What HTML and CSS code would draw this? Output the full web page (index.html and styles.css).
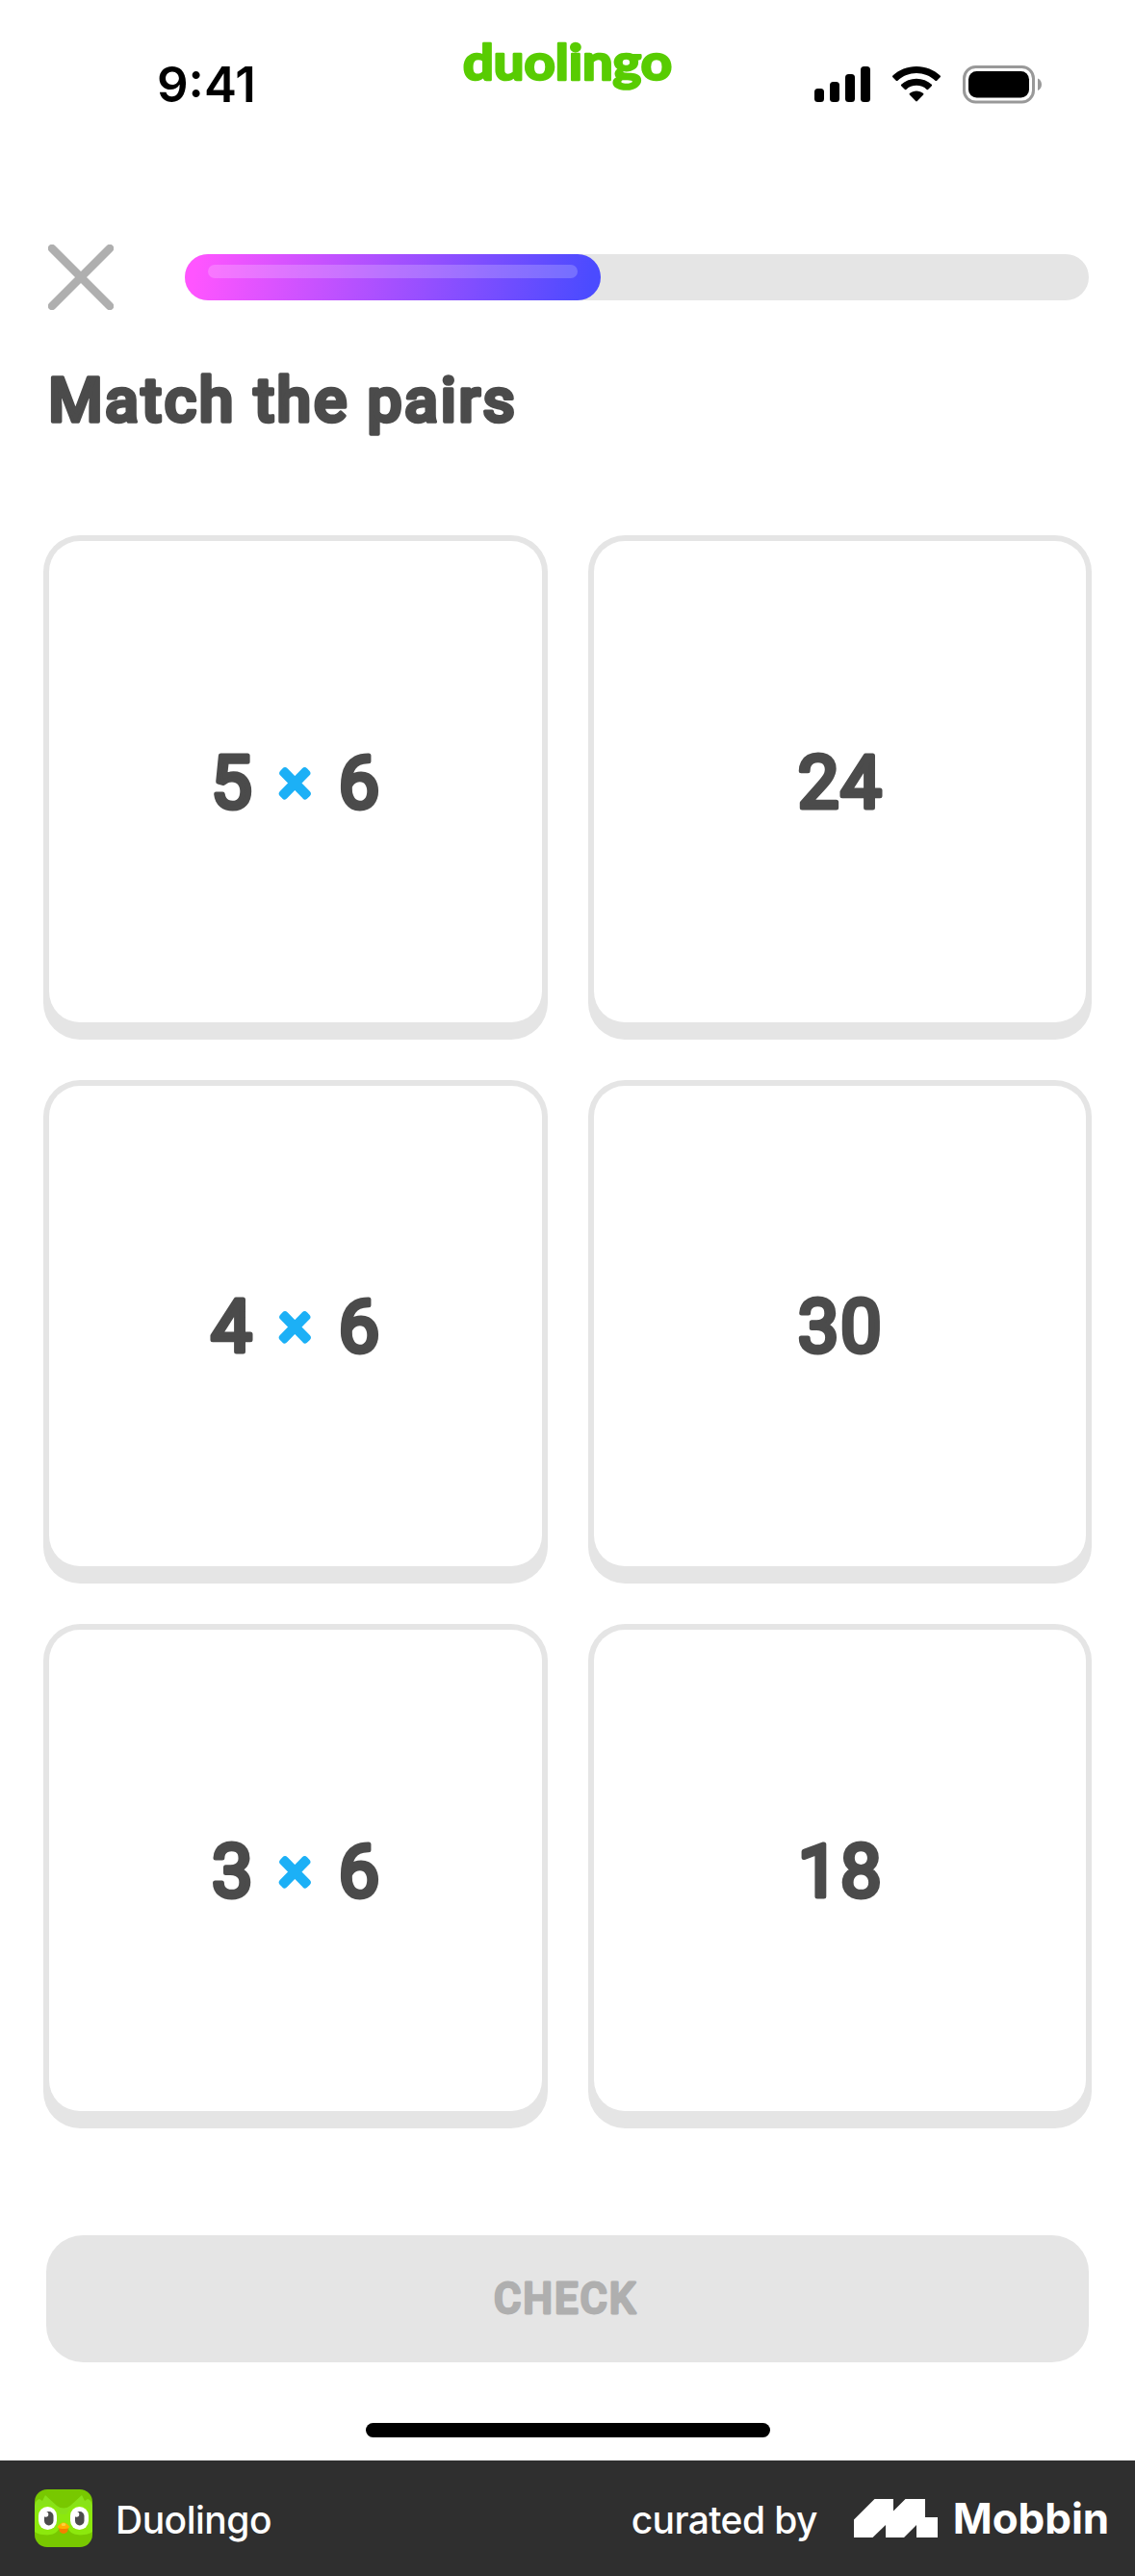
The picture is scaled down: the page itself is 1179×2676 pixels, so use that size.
FILE: index.html
```html
<!DOCTYPE html>
<html lang="en">
<head>
<meta charset="utf-8">
<title>Match the pairs</title>
<link rel="stylesheet" href="styles.css">
</head>
<body>
<div class="screen">
  <header class="status">
    <div class="time">9:41</div>
    <svg class="wordmark" width="226" height="80" viewBox="0 0 226 80"><text x="5" y="53" textLength="217" lengthAdjust="spacingAndGlyphs">duolingo</text></svg>
    <div class="indicators">
      <svg width="58" height="38" viewBox="0 0 58 38"><rect y="24" width="10" height="14" rx="3.5"/><rect x="16" y="17" width="10" height="21" rx="3.5"/><rect x="32" y="9" width="10" height="29" rx="3.5"/><rect x="48" y="1" width="10" height="37" rx="3.5"/></svg>
      <svg width="50" height="38" viewBox="0 0 50 38"><path d="M25 1C34.500 1 43.400 4.600 49.600 10.600Q50.400 11.400 49.600 12.200L46.200 15.700Q45.400 16.500 44.500 15.700C39.200 10.900 32.300 8.100 25 8.100S10.800 10.900 5.500 15.700Q4.600 16.500 3.800 15.700L.4 12.200Q-.4 11.400.4 10.600C6.600 4.600 15.500 1 25 1Z"/><path d="M25 13.700C31 13.700 36.600 15.900 40.800 19.700Q41.600 20.500 40.800 21.300L37.300 24.800Q36.500 25.500 35.700 24.900C32.800 22.300 29.100 20.800 25 20.800S17.200 22.300 14.300 24.900Q13.500 25.500 12.700 24.800L9.200 21.300Q8.400 20.500 9.200 19.700C13.400 15.900 19 13.700 25 13.700Z"/><path d="M25 26.400C27.700 26.400 30.100 27.300 32.100 28.900Q32.900 29.700 32.100 30.500L25.800 37Q25 37.800 24.200 37L17.900 30.500Q17.100 29.700 17.900 28.900C19.900 27.300 22.300 26.400 25 26.400Z"/></svg>
      <svg width="83" height="40" viewBox="0 0 83 40"><rect x="1.500" y="1.500" width="72" height="36.500" rx="12" fill="none" stroke="#999" stroke-width="3"/><rect x="6" y="6" width="63" height="27.500" rx="8.500"/><path d="M78 13.500C83.300 15.500 83.300 24 78 26Z" fill="#999"/></svg>
    </div>
  </header>

  <div class="progress-row">
    <svg class="close" width="68" height="68" viewBox="0 0 68 68"><path d="M4 4 64 64M64 4 4 64"/></svg>
    <div class="track"><div class="fill" style="width:432px"><div class="shine"></div></div></div>
  </div>

  <h1 class="title"><svg width="520" height="90" viewBox="0 0 520 90"><text x="2" y="65" textLength="485" lengthAdjust="spacing">Match the pairs</text></svg></h1>

  <main class="pairs">
    <div class="card"><div class="face"><svg class="sum" width="200" height="120" viewBox="0 0 200 120"><text x="34" y="86.500" text-anchor="middle">5</text><text class="times" x="99.500" y="78" text-anchor="middle">×</text><text x="166.500" y="86.500" text-anchor="middle">6</text></svg></div></div>
    <div class="card"><div class="face"><svg class="sum" width="200" height="120" viewBox="0 0 200 120"><text x="101" y="86.500" text-anchor="middle">24</text></svg></div></div>
    <div class="card"><div class="face"><svg class="sum" width="200" height="120" viewBox="0 0 200 120"><text x="34" y="86.500" text-anchor="middle">4</text><text class="times" x="99.500" y="78" text-anchor="middle">×</text><text x="166.500" y="86.500" text-anchor="middle">6</text></svg></div></div>
    <div class="card"><div class="face"><svg class="sum" width="200" height="120" viewBox="0 0 200 120"><text x="101" y="86.500" text-anchor="middle">30</text></svg></div></div>
    <div class="card"><div class="face"><svg class="sum" width="200" height="120" viewBox="0 0 200 120"><text x="35" y="86.500" text-anchor="middle">3</text><text class="times" x="99.500" y="78" text-anchor="middle">×</text><text x="166.500" y="86.500" text-anchor="middle">6</text></svg></div></div>
    <div class="card"><div class="face"><svg class="sum" width="200" height="120" viewBox="0 0 200 120"><text x="101" y="86.500" text-anchor="middle">18</text></svg></div></div>
  </main>

  <button class="check"><svg width="180" height="60" viewBox="0 0 180 60"><text x="13" y="45" textLength="149" lengthAdjust="spacingAndGlyphs">CHECK</text></svg></button>
  <div class="home"></div>
</div>

<footer class="footer">
  <svg class="app-icon" width="60" height="60" viewBox="0 0 60 60">
    <rect width="60" height="60" fill="#78c800"/>
    <path d="M0 44V17Q1 11 5 10L8 12 11 6 23 17Q30 22 37 17L49 6 52 12 55 10Q59 11 60 17V44Q54 48 44 47 37 46 35 41H25Q23 46 16 47 6 48 0 44Z" fill="#89e219"/>
    <path d="M0 44V25Q3 17 13 16 23 17 27 26H33Q37 17 47 16 57 17 60 25V44Q54 48 44 47 37 46 35 41H25Q23 46 16 47 6 48 0 44Z" fill="#8eec05" opacity=".6"/>
    <rect x="4" y="18" width="19" height="24" rx="9.500" fill="#fff"/><rect x="37" y="18" width="19" height="24" rx="9.500" fill="#fff"/>
    <rect x="10" y="23" width="9.500" height="14.500" rx="4.700" fill="#4b4b4b"/><rect x="42" y="23" width="9.500" height="14.500" rx="4.700" fill="#4b4b4b"/>
    <circle cx="11.500" cy="26" r="2.800" fill="#fff"/><circle cx="43.500" cy="26" r="2.800" fill="#fff"/>
    <path d="M25 40H35L34 44Q30 48 26 44Z" fill="#f57f00"/><path d="M23.500 39Q30 30 36.500 39 35 41.500 30 41 25 41.500 23.500 39Z" fill="#ffb100"/><ellipse cx="30" cy="36.500" rx="2.300" ry="1.500" fill="#ffd23e"/>
  </svg>
  <span class="app-name">Duolingo</span>
  <span class="curated">curated by</span>
  <svg class="mobbin-mark" width="87" height="40" viewBox="0 0 87 40"><path d="M0 21.500 21.500 0H41V12.500L53.500 0H74V19H87V40H65V27L52 40H33V27L19.500 40H0Z" fill="#fff"/></svg>
  <span class="mobbin">Mobbin</span>
</footer>
</body>
</html>
```
FILE: styles.css
```css
* { box-sizing: border-box; }
body { margin: 0; width: 1179px; background: #fff; font-family: Inter, "Liberation Sans", sans-serif; }
svg { display: block; flex: none; }

.screen { height: 2556px; padding: 0 48px; display: flex; flex-direction: column; }

.status { height: 254px; padding: 30px 48px 0 115px; display: flex; align-items: flex-start; }
.time { width: 313px; margin-top: 28px; font-size: 51px; line-height: 60px; font-weight: 560; letter-spacing: 0; color: #000; }
.wordmark text { font: 700 51px Lato, sans-serif; fill: #58cc02; stroke: #58cc02; stroke-width: 2.600px; stroke-linejoin: round; }
.indicators { margin-left: auto; display: flex; margin-top: 38px; }
.indicators svg + svg { margin-left: 23px; }

.progress-row { display: flex; align-items: center; gap: 74px; padding-left: 2px; height: 68px; flex: none; }
.close path { stroke: #afafaf; stroke-width: 8.500px; stroke-linecap: round; }
.track { flex: 1; height: 48px; border-radius: 24px; background: #e5e5e5; }
.fill { height: 48px; padding: 11px 24px 0; border-radius: 24px; background: linear-gradient(100deg, #ff55ff 3%, #4b4bff 97%); }
.shine { height: 14px; border-radius: 7px; background: rgba(255, 255, 255, .2); }

.title { margin: 51px 0 0; height: 183px; font-size: 68px; }
.title text { font: 500 65px Roboto, sans-serif; fill: #4b4b4b; stroke: #4b4b4b; stroke-width: 3.600px; stroke-linejoin: round; }

.pairs { margin: 0 -3px; display: grid; grid-template-columns: 1fr 1fr; gap: 42px; }
.card { height: 523.500px; padding: 6px 6px 18px; border-radius: 38px; background: #e5e5e5; }
.face { height: 100%; border-radius: 32px; background: #fff; display: flex; align-items: center; justify-content: center; }
.sum text { font: 400 76px Roboto, sans-serif; letter-spacing: 1.500px; fill: #4b4b4b; stroke: #4b4b4b; stroke-width: 5px; stroke-linejoin: round; }
.sum .times { font-weight: 300; font-size: 61px; letter-spacing: 0; fill: #1cb0f6; stroke: #1cb0f6; stroke-width: 7px; }

.check { margin: 111px 0 0; padding: 0; height: 132px; flex: none; border: 0; border-radius: 38px; background: #e5e5e5; display: flex; align-items: center; justify-content: center; }
.check text { font: 500 44px Roboto, sans-serif; letter-spacing: 2px; fill: #afafaf; stroke: #afafaf; stroke-width: 2.800px; stroke-linejoin: round; }
.home { width: 420px; height: 15px; margin: 63px auto 0; border-radius: 8px; background: #000; }

.footer { height: 120px; padding: 0 27px 0 36px; background: #2f2f2f; color: #fff; display: flex; align-items: center; white-space: nowrap; }
.app-icon { border-radius: 13px; }
.app-name { margin-left: 24px; font-size: 39px; font-weight: 500; letter-spacing: -.5px; padding-top: 2px; }
.curated { margin-left: auto; font-size: 39px; font-weight: 500; letter-spacing: -.6px; padding-top: 2px; }
.mobbin-mark { margin-left: 38px; }
.mobbin { margin-left: 16px; font-size: 44px; font-weight: 700; letter-spacing: -.1px; }
```
